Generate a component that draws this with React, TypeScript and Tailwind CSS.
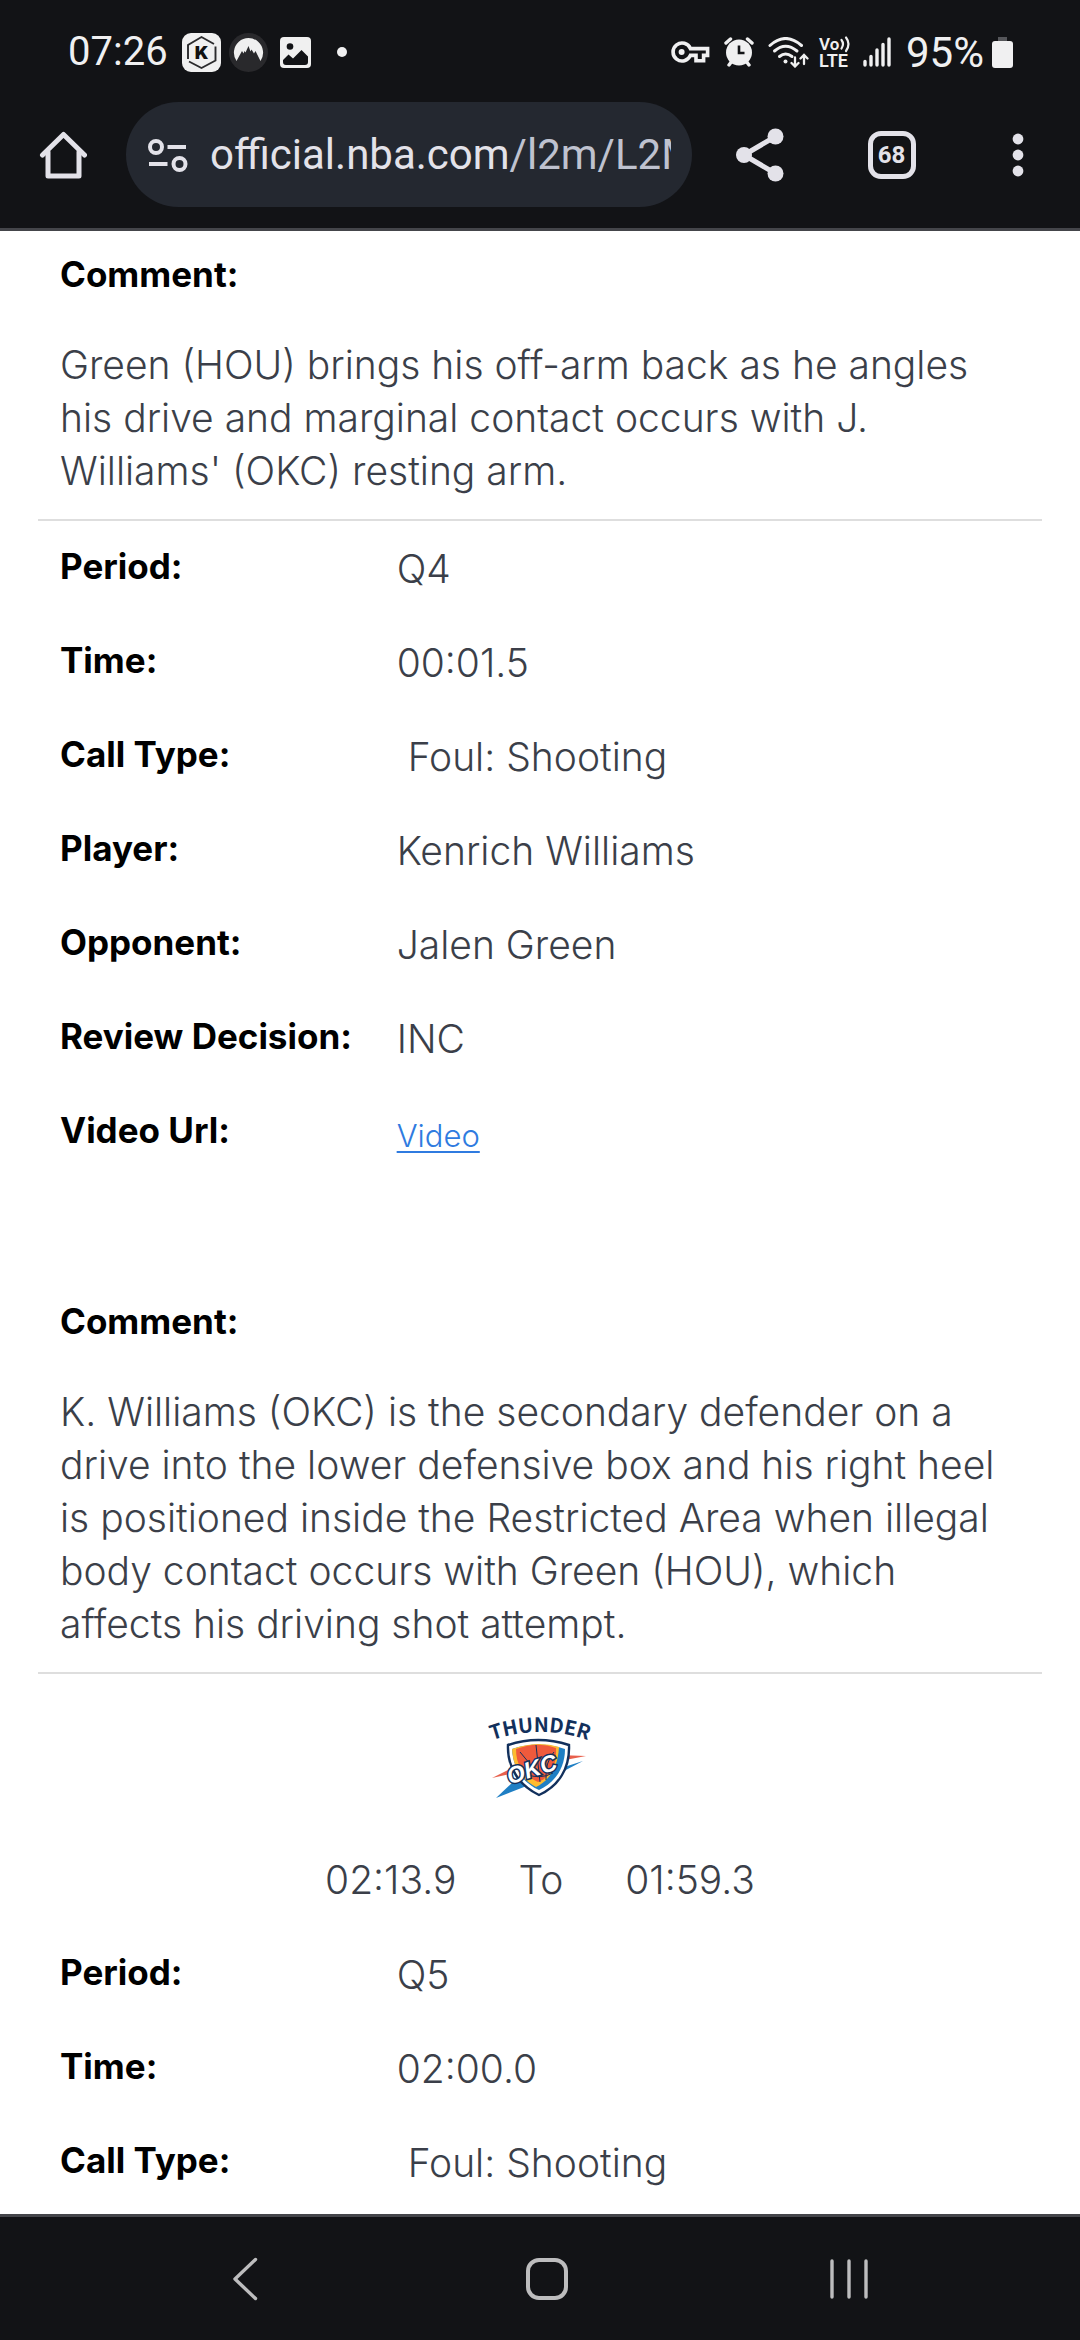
import type { ReactNode } from "react";

interface Detail {
  label: string;
  value: ReactNode;
}

const firstPlay: Detail[] = [
  { label: "Period:", value: "Q4" },
  { label: "Time:", value: "00:01.5" },
  { label: "Call Type:", value: "\u00a0Foul: Shooting" },
  { label: "Player:", value: "Kenrich Williams" },
  { label: "Opponent:", value: "Jalen Green" },
  { label: "Review Decision:", value: "INC" },
  {
    label: "Video Url:",
    value: (
      <a href="#video" className="text-[31px] text-[#2f7be0] underline decoration-2 underline-offset-4">
        Video
      </a>
    ),
  },
];

const secondPlay: Detail[] = [
  { label: "Period:", value: "Q5" },
  { label: "Time:", value: "02:00.0" },
  { label: "Call Type:", value: "\u00a0Foul: Shooting" },
];

function StatusBar() {
  return (
    <div className="flex h-[102px] items-center justify-between pt-0.5 pr-[67px] pl-[68px] text-[40px] text-[#f0f0f1]">
      <div className="flex items-center">
        <span>07:26</span>
        {/* K app */}
        <svg className="ml-3.5" width="39" height="39" viewBox="0 0 39 39">
          <rect width="39" height="39" rx="9" fill="#f0f0f0" />
          <path d="M6 26 V12 L19.5 4 L32 11 M33.5 13.5 V27.5 L19.5 35 L7 28.5" fill="none" stroke="#2b2b2d" strokeWidth="1.9" />
          <text x="19.5" y="26" textAnchor="middle" fontFamily="Inter, sans-serif" fontWeight="900" fontSize="18" fill="#111">K</text>
        </svg>
        {/* mountain app */}
        <svg className="ml-2" width="39" height="39" viewBox="0 0 39 39">
          <circle cx="19.5" cy="19.5" r="19.5" fill="#29292c" />
          <path d="M7.5 28 A14.6 14.6 0 1 1 31.5 28 L26.5 18 L25 20.5 L22.5 16.5 L21.5 18.5 L19.5 13 L16.5 19.5 L15.5 18 L14.5 20.5 L13 18 Z" fill="#f0f0f0" />
        </svg>
        {/* picture */}
        <svg className="ml-3" width="31" height="31" viewBox="0 0 31 31">
          <rect width="31" height="31" rx="4" fill="#f0f0f0" />
          <circle cx="10" cy="9.5" r="3.3" fill="#121316" />
          <path d="M3 23 L8.5 17.5 L13 21.5 L21.5 13 L28 19.5 V25 Q28 28 25 28 H6 Q3 28 3 25 Z" fill="#121316" />
        </svg>
        <span className="ml-[26px] size-2.5 rounded-full bg-[#f0f0f1]" />
      </div>

      <div className="flex items-center">
        {/* vpn key */}
        <svg width="39" height="24" viewBox="0 0 39 24" fill="none" stroke="#f0f0f1" strokeWidth="3.6">
          <path d="M19.4 8.6 A9 9 0 1 0 19.4 15.4 H25 V20.8 H32.6 V15.4 H36.6 V8.6 Z" />
          <circle cx="10.6" cy="12" r="3" fill="#f0f0f1" stroke="none" />
        </svg>
        {/* alarm */}
        <svg className="ml-3.5" width="30" height="30" viewBox="0 0 30 30">
          <path d="M2 6 L6.5 2 M28 6 L23.5 2 M5 28 L8 24 M25 28 L22 24" stroke="#f0f0f1" strokeWidth="3.4" strokeLinecap="round" />
          <circle cx="15" cy="15.5" r="13" fill="#f0f0f1" />
          <path d="M15 8.5 V16 H20.5" fill="none" stroke="#121316" strokeWidth="2.6" />
        </svg>
        {/* wifi with traffic arrows */}
        <svg className="ml-3.5" width="41" height="31" viewBox="0 0 41 31" fill="none" stroke="#f0f0f1" strokeWidth="3" strokeLinecap="round">
          <path d="M2 8.5 Q17.5 -5.5 33.5 8.5" />
          <path d="M6.5 14 Q17.5 4.5 29 14" />
          <path d="M11.5 19.5 Q17.5 14.5 24 19.5" />
          <circle cx="17.5" cy="24.5" r="2" fill="#f0f0f1" stroke="none" />
          <path d="M27 20.5 V29 M23.5 26 L27 29.5 L30.5 26 M36 27 V18.5 M32.5 21.5 L36 18 L39.5 21.5" strokeWidth="2.3" />
        </svg>
        {/* VoLTE */}
        <svg className="ml-2.5 overflow-visible" width="32" height="32" viewBox="0 0 32 32" fill="#f0f0f1">
          <text x="0" y="14" fontFamily="Roboto, sans-serif" fontWeight="600" fontSize="17">Vo</text>
          <text x="0" y="31" fontFamily="Roboto, sans-serif" fontWeight="600" fontSize="18">LTE</text>
          <path d="M22.5 4 Q25.5 8 22.5 12.5 M27 1.5 Q32 8 27 15" fill="none" stroke="#f0f0f1" strokeWidth="2.2" strokeLinecap="round" />
        </svg>
        {/* signal */}
        <svg className="ml-3" width="29" height="30" viewBox="0 0 29 30" stroke="#f0f0f1" strokeWidth="3.4" strokeLinecap="round">
          <path d="M2 24.5 V28 M8 19.5 V28 M14 13 V28 M20 7.5 V28 M26 2 V28" />
        </svg>
        <span className="ml-3.5 text-[42px]">95%</span>
        {/* battery */}
        <svg className="ml-2" width="21" height="31" viewBox="0 0 21 31">
          <rect x="6" width="9" height="6" fill="#55565a" />
          <rect y="4" width="21" height="27" rx="3" fill="#f0f0f1" />
        </svg>
      </div>
    </div>
  );
}

function Toolbar() {
  return (
    <div className="flex items-center pb-[21px] text-[#e3e2e9]">
      <button type="button" aria-label="Home" className="flex w-[126px] justify-center">
        <svg width="48" height="50" viewBox="0 0 48 50" fill="none" stroke="currentColor" strokeWidth="5" strokeLinecap="round" strokeLinejoin="round">
          <path d="M3.5 25 L24.5 4.5 L45.5 25" />
          <path d="M9 22 V46 H40 V22" />
        </svg>
      </button>

      <button type="button" className="flex h-[105px] min-w-0 flex-1 items-center rounded-full bg-[#242830] pr-[21px] pl-[22px]">
        <svg className="shrink-0" width="40" height="36" viewBox="0 0 40 36" fill="none" stroke="currentColor" strokeWidth="4">
          <circle cx="8" cy="10" r="6" />
          <path d="M19.5 10 H38 M1 27 H19.5" />
          <circle cx="31.5" cy="27" r="6" />
        </svg>
        <span className="ml-[22px] flex-1 overflow-hidden text-left text-[42px] whitespace-nowrap">
          official.nba.com<span className="text-[#bfc2cf]">/l2m/L2M</span>
        </span>
      </button>

      <button type="button" aria-label="Share" className="flex w-[136px] justify-center">
        <svg width="48" height="54" viewBox="0 0 48 54" fill="currentColor">
          <path d="M8 27 L39.5 8.5 M8 27 L39.5 45.5" stroke="currentColor" strokeWidth="5" />
          <circle cx="8" cy="27" r="8" />
          <circle cx="39.5" cy="8.5" r="8" />
          <circle cx="39.5" cy="45.5" r="8" />
        </svg>
      </button>
      <button type="button" aria-label="Tabs" className="flex w-[127px] justify-center">
        <span className="flex size-12 items-center justify-center rounded-[13px] border-5 border-current text-2xl font-bold">
          68
        </span>
      </button>
      <button type="button" aria-label="More" className="flex w-[125px] justify-center">
        <svg width="12" height="44" viewBox="0 0 12 44" fill="currentColor">
          <circle cx="6" cy="6" r="5.4" />
          <circle cx="6" cy="22" r="5.4" />
          <circle cx="6" cy="38" r="5.4" />
        </svg>
      </button>
    </div>
  );
}

function DetailList({ details }: { details: Detail[] }) {
  return (
    <dl className="pt-[3px]">
      {details.map((d) => (
        <div key={d.label} className="grid h-[94px] grid-cols-3 pt-[18px]">
          <dt className="pl-[22px] text-[35px] leading-[48px] font-bold whitespace-nowrap text-black">{d.label}</dt>
          <dd className="col-span-2 pl-6">{d.value}</dd>
        </div>
      ))}
    </dl>
  );
}

function Comment({ children }: { children: ReactNode }) {
  return (
    <section className="border-b-2 border-[#dedede] px-[22px] pt-[18px] pb-[22px]">
      <h3 className="mb-[39px] text-[35px] leading-[50px] font-bold text-black">Comment:</h3>
      <p className="pr-2">{children}</p>
    </section>
  );
}

function ThunderLogo() {
  return (
    <svg className="overflow-visible" width="100" height="92" viewBox="0 0 100 92" role="img" aria-label="Oklahoma City Thunder">
      <defs>
        <path id="arc" d="M-10 37 Q50 11 110 37" />
      </defs>
      <text fontFamily="'Noto Sans CJK JP', sans-serif" fontWeight="700" fontSize="20" fill="#12305c" textAnchor="middle">
        <textPath href="#arc" startOffset="50%">THUNDER</textPath>
      </text>
      {/* side streaks */}
      <path d="M2 70 L24 59 L40 58 L20 66 Z" fill="#e8604c" />
      <path d="M6 90 L24 73 L40 76 L34 79 Z" fill="#1f7fc4" />
      <path d="M68 47 L96 48 L70 53 Z" fill="#e8604c" />
      <path d="M68 61 L93 53 L72 64 Z" fill="#1f7fc4" />
      {/* shield */}
      <path d="M18 37 Q48 27 79 37 C80 60 69 78 49 87 C30 78 17 60 18 37 Z" fill="#fff" stroke="#12305c" strokeWidth="2.4" />
      <path d="M22 41 Q48 32 75 41 C75 59 66 74 49 82 C33 75 23 60 22 41 Z" fill="#1f7fc4" />
      <path d="M22 41 Q48 32 69 39 C68 59 60 72 46 79 C31 71 23 59 22 41 Z" fill="#fdbb30" />
      <path d="M26 41 Q48 33 66 40 C67 58 60 70 48 74 C34 68 26 58 26 41 Z" fill="#ef5a3c" />
      <path d="M30 44 L40 56 M46 37 L50 74 M64 44 Q55 54 56 72 M36 66 Q50 72 63 65" fill="none" stroke="#12305c" strokeWidth="1" />
      <g transform="rotate(-18 42 62)">
        <text x="42" y="69" textAnchor="middle" fontFamily="'Liberation Sans', sans-serif" fontStyle="italic" fontWeight="700" fontSize="23" fill="#fff" stroke="#12305c" strokeWidth="3" paintOrder="stroke">OKC</text>
      </g>
    </svg>
  );
}

function NavBar() {
  return (
    <nav className="mt-auto grid h-[126px] grid-cols-3 items-center border-t-3 border-[#44454a] bg-[#121316] pr-20 pl-[94px] text-[#bdbdbe]">
      <button type="button" aria-label="Back" className="flex justify-center">
        <svg width="26" height="44" viewBox="0 0 26 44" fill="none" stroke="currentColor" strokeWidth="3.4" strokeLinecap="round" strokeLinejoin="round">
          <path d="M23.5 2.5 L3 22 L23.5 41.5" />
        </svg>
      </button>
      <button type="button" aria-label="Home screen" className="flex justify-center">
        <span className="size-[42px] rounded-[13px] border-4 border-current" />
      </button>
      <button type="button" aria-label="Recent apps" className="flex justify-center">
        <svg width="40" height="42" viewBox="0 0 40 42" stroke="currentColor" strokeWidth="3.4" strokeLinecap="round">
          <path d="M3 3 V39 M20 3 V39 M37 3 V39" />
        </svg>
      </button>
    </nav>
  );
}

export default function App() {
  return (
    <div className="flex min-h-screen flex-col bg-white font-['Inter',sans-serif]">
      <header className="border-b-3 border-[#44454a] bg-[#121316] font-['Roboto',sans-serif]">
        <StatusBar />
        <Toolbar />
      </header>

      <main className="px-[38px] text-[39px] leading-[53px] font-light text-[#3b3f49]">
        <Comment>
          Green (HOU) brings his off-arm back as he angles his drive and marginal contact occurs with J. Williams'
          (OKC) resting arm.
        </Comment>
        <DetailList details={firstPlay} />
        <div className="h-24" />
        <Comment>
          K. Williams (OKC) is the secondary defender on a drive into the lower defensive box and his right heel is
          positioned inside the Restricted Area when illegal body contact occurs with Green (HOU), which affects his
          driving shot attempt.
        </Comment>
        <div className="flex justify-center pt-[34px] pb-[33px]">
          <ThunderLogo />
        </div>
        <div className="flex h-[94px] justify-center gap-[62px] pt-5">
          <span>02:13.9</span>
          <span>To</span>
          <span>01:59.3</span>
        </div>
        <DetailList details={secondPlay} />
      </main>

      <NavBar />
    </div>
  );
}
